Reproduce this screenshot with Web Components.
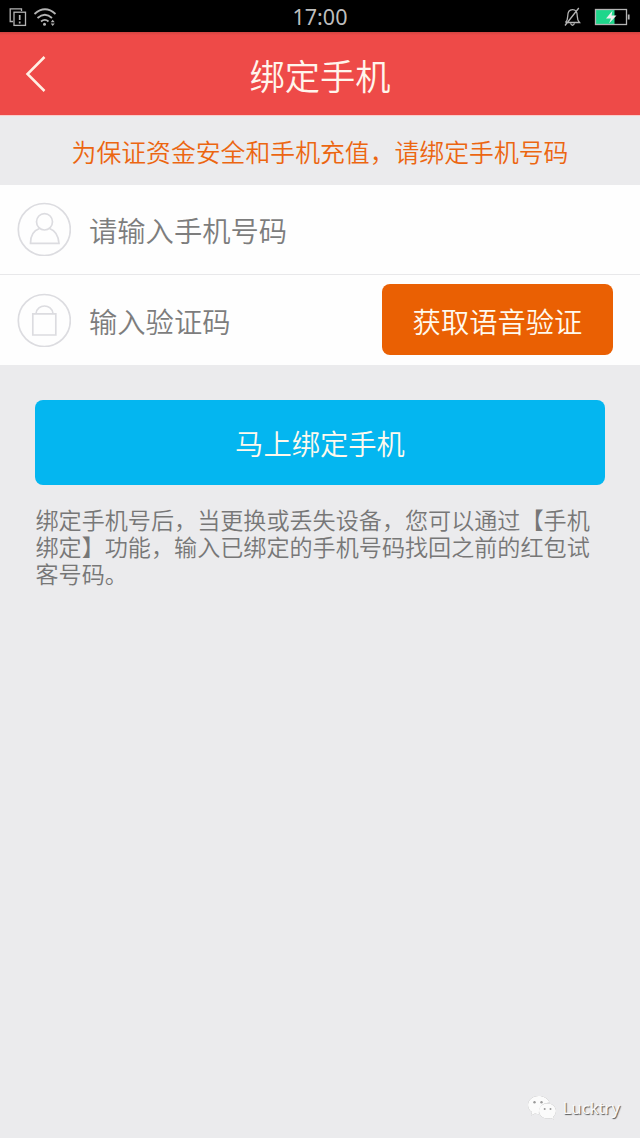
<!DOCTYPE html>
<html lang="zh-CN">
<head>
<meta charset="utf-8">
<title>绑定手机</title>
<style>
html,body{margin:0;height:100%}
body{background:#ebebed;font-family:"Noto Sans CJK SC","Noto Sans",sans-serif;overflow:hidden}
</style>
</head>
<body>
<bind-phone-page></bind-phone-page>
<script>
function define(name, html) {
  const template = document.createElement('template');
  template.innerHTML = html;
  customElements.define(name, class extends HTMLElement {
    constructor() {
      super();
      this.attachShadow({mode: 'open'}).append(template.content.cloneNode(true));
    }
  });
}

define('status-bar', `
<style>
:host{display:grid;grid-template-columns:1fr auto 1fr;align-items:center;height:32px;background:#000;color:#bdbdbd;font:21.5px/32px "Noto Sans",sans-serif}
svg{display:block;fill:none;stroke:#b4b4b4}
.left{padding-left:9px}
.right{justify-self:end;padding-right:10.5px}
.time{padding-top:1px}
</style>
<svg class="left" width="50" height="32">
  <path d="M4 20.5H1.2V7.8H12.5V10" stroke-width="1.3"/>
  <rect x="5" y="11.2" width="11.5" height="13.2" stroke-width="1.3"/>
  <path d="M10.7 14v5M10.7 20.5v2" stroke-width="1.7"/>
  <path d="M25.5 13Q36 3.5 46.5 13M28.5 17Q36 10.500 43 17M32 20.500Q36 17.200 39.500 20.500" stroke-width="1.8"/>
  <circle cx="35.500" cy="23.300" r="1.500" fill="#b4b4b4" stroke="none"/>
  <path d="M41.700 21.300l2-2.500 2 2.500zM41.700 22.500l2 2.500 2-2.500z" fill="#b4b4b4" stroke="none"/>
</svg>
<span class="time">17:00</span>
<svg class="right" width="70" height="32">
  <path d="M5.500 21.500H19.500Q17.300 19 17.300 15.500C17.300 10.500 15.500 8.700 12.500 8.700S7.700 10.500 7.700 15.500Q7.700 19 5.500 21.500M10.500 22.500Q12.500 26 14.500 22.500M18.800 7L5 24.500" stroke-width="1.300"/>
  <rect x="36" y="8.500" width="18.500" height="15" fill="#1fd68b" stroke="none"/>
  <rect x="35.500" y="8.500" width="31" height="15" stroke-width="1.300"/>
  <path d="M68.700 13.500v5" stroke-width="1.800"/>
  <path d="M52.500 9.800L46 17.500H51L49 22.500L56.500 14.500H51.500Z" fill="#eee" stroke="none"/>
</svg>`);

define('nav-bar', `
<style>
:host{display:grid;grid-template-columns:1fr auto 1fr;align-items:center;height:84px;background:linear-gradient(#cf4340,#ee4a48 3px);color:#fff5ec;border-bottom:1px solid #f8cdcb;box-sizing:border-box}
svg{display:block;margin-left:24px;fill:none;stroke:#fff0e4;stroke-width:2.5}
h1{margin:0;padding-top:2px;font-size:35.3px;line-height:50px;font-weight:350}
</style>
<svg width="24" height="40"><path d="M20.500 3L3.500 20L20.500 37"/></svg>
<h1><slot></slot></h1>`);

define('notice-strip', `
<style>
:host{display:flex;align-items:center;justify-content:center;height:69px;box-sizing:border-box;color:#ec6611;font-size:24.85px;line-height:36px;font-weight:350;white-space:nowrap}
</style><slot></slot>`);

define('field-row', `
<style>
:host{display:flex;align-items:center;height:90px;box-sizing:border-box;padding:0 27px 0 17px;background:#fefefe}
:host(:not(:last-of-type)){padding-bottom:1px;border-bottom:1px solid #e8e8ea}
:host(:last-of-type){padding-bottom:1px}
.label{margin-left:18px;padding-top:2px;flex:1;color:#7d7d7d;font-size:28.3px;line-height:42px;font-weight:350}
</style>
<slot name="icon"></slot><span class="label"><slot></slot></span><slot name="action"></slot>`);

const circle = body => `
<style>:host{display:block;height:54px}svg{display:block;fill:none;stroke:#dcdce0;stroke-width:1.700}</style>
<svg width="54" height="54"><circle cx="27.300" cy="27.500" r="26"/>${body}</svg>`;
define('user-icon', circle('<ellipse cx="27.500" cy="19.800" rx="8" ry="8.200"/><path d="M22.500 26.500Q13.500 29.500 13.500 41.300H42Q41 29.500 32.500 26.500"/>'));
define('bag-icon', circle('<path d="M15.800 20.800H38.800V42H15.800ZM19 20.500C20 10.500 35 10.500 36 20.500"/>'));

define('action-button', `
<style>
:host{display:flex;align-items:center;justify-content:center;box-sizing:border-box;border-radius:8px;color:#fff9ed;font-size:28.3px;font-weight:350;line-height:42px;padding-top:2px}
:host([kind=voice]){width:231px;height:71px;background:#ea6003}
:host([kind=submit]){height:85px;margin:35px 35px 0 35px;padding-top:1px;background:#04b6f0}
</style><slot></slot>`);

define('help-text', `
<style>:host{display:block;margin:21px 35px 0 35.500px;color:#777;font-size:23.100px;line-height:26.800px;font-weight:350;white-space:nowrap}</style><slot></slot>`);

define('account-mark', `
<style>
:host{position:absolute;right:20px;bottom:15px;display:flex;align-items:center;gap:6px;color:#fafafa;font:16.700px/30px "Noto Sans",sans-serif;text-shadow:1px 1px 1px #555}
svg{display:block;filter:drop-shadow(.5px .7px .6px #999)}
</style>
<svg width="30" height="28">
  <path fill="#fbfbfb" d="M11.500 2C5.500 2 1 6 1 11Q1 15.500 5 18L4 21.500L8 19.500Q10 20.200 12 20.200Q11 9.500 22.500 8.500C21 4.500 16.700 2 11.500 2Z"/>
  <path fill="#fbfbfb" d="M20.500 9.500C15.500 9.500 12 13 12 17S15.500 24.500 20.500 24.500Q22.500 24.500 24 24L27 25.500L26.500 22.500Q29 20.500 29 17C29 13 25.500 9.500 20.500 9.500Z"/>
  <g fill="#999"><circle cx="7.500" cy="8.300" r="1.200"/><circle cx="14.500" cy="8.300" r="1.200"/><circle cx="17.700" cy="15" r="1"/><circle cx="23.500" cy="15" r="1"/></g>
</svg><slot></slot>`);

define('bind-phone-page', `
<style>:host{position:relative;display:block;width:640px;height:1138px;overflow:hidden;background:#ebebed}</style>
<status-bar></status-bar>
<nav-bar>绑定手机</nav-bar>
<notice-strip>为保证资金安全和手机充值，请绑定手机号码</notice-strip>
<main>
  <section>
    <field-row><user-icon slot="icon"></user-icon>请输入手机号码</field-row>
    <field-row><bag-icon slot="icon"></bag-icon>输入验证码<action-button kind="voice" slot="action">获取语音验证</action-button></field-row>
  </section>
  <action-button kind="submit">马上绑定手机</action-button>
  <help-text>绑定手机号后，当更换或丢失设备，您可以通过【手机<br>绑定】功能，输入已绑定的手机号码找回之前的红包试<br>客号码。</help-text>
</main>
<account-mark>Lucktry</account-mark>`);
</script>
</body>
</html>
